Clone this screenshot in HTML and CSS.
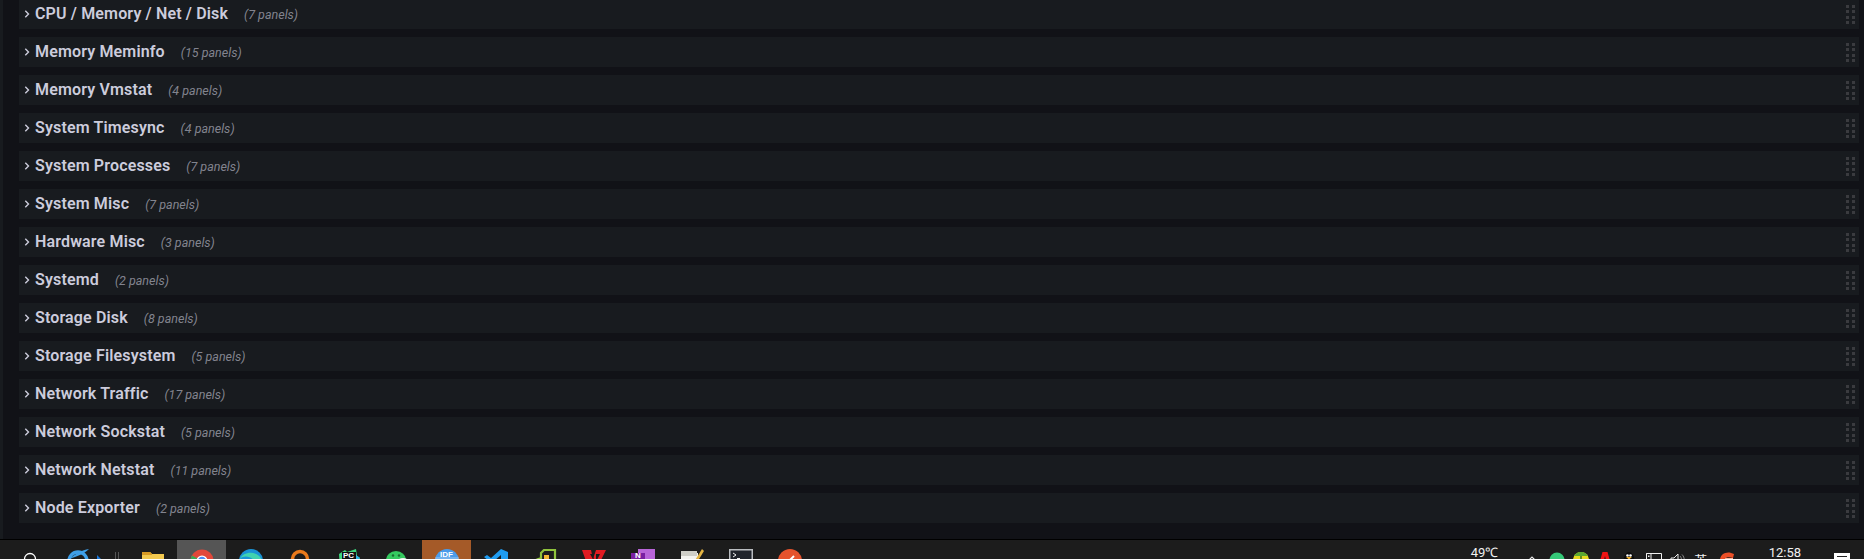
FILE: index.html
```html
<!DOCTYPE html>
<html lang="en">
<head>
    <meta charset="UTF-8">
    <meta name="viewport" content="width=device-width, initial-scale=1.0">
    <title>Node Exporter</title>
    <link rel="stylesheet" href="styles.css">
</head>
<body>

    <svg class="defs" width="0" height="0">
        <symbol id="chevron" viewBox="0 0 16 16">
            <path d="M6.300 4.800 9.500 8l-3.200 3.200" fill="none" stroke="currentColor" stroke-width="1.400"/>
        </symbol>
        <symbol id="grip" viewBox="0 0 10 19">
            <path d="M0 0h3v3H0zM6 0h3v3H6zM0 5h3v3H0zM6 5h3v3H6zM0 11h3v3H0zM6 11h3v3H6zM0 16h3v3H0zM6 16h3v3H6z" fill="currentColor"/>
        </symbol>
    </svg>

    <main class="dashboard">
        <div class="rows">
            <div class="row"><svg class="chevron"><use href="#chevron"/></svg><span class="row-title">CPU / Memory / Net / Disk</span><span class="row-count">(7 panels)</span><svg class="grip"><use href="#grip"/></svg></div>
            <div class="row"><svg class="chevron"><use href="#chevron"/></svg><span class="row-title">Memory Meminfo</span><span class="row-count">(15 panels)</span><svg class="grip"><use href="#grip"/></svg></div>
            <div class="row"><svg class="chevron"><use href="#chevron"/></svg><span class="row-title">Memory Vmstat</span><span class="row-count">(4 panels)</span><svg class="grip"><use href="#grip"/></svg></div>
            <div class="row"><svg class="chevron"><use href="#chevron"/></svg><span class="row-title">System Timesync</span><span class="row-count">(4 panels)</span><svg class="grip"><use href="#grip"/></svg></div>
            <div class="row"><svg class="chevron"><use href="#chevron"/></svg><span class="row-title">System Processes</span><span class="row-count">(7 panels)</span><svg class="grip"><use href="#grip"/></svg></div>
            <div class="row"><svg class="chevron"><use href="#chevron"/></svg><span class="row-title">System Misc</span><span class="row-count">(7 panels)</span><svg class="grip"><use href="#grip"/></svg></div>
            <div class="row"><svg class="chevron"><use href="#chevron"/></svg><span class="row-title">Hardware Misc</span><span class="row-count">(3 panels)</span><svg class="grip"><use href="#grip"/></svg></div>
            <div class="row"><svg class="chevron"><use href="#chevron"/></svg><span class="row-title">Systemd</span><span class="row-count">(2 panels)</span><svg class="grip"><use href="#grip"/></svg></div>
            <div class="row"><svg class="chevron"><use href="#chevron"/></svg><span class="row-title">Storage Disk</span><span class="row-count">(8 panels)</span><svg class="grip"><use href="#grip"/></svg></div>
            <div class="row"><svg class="chevron"><use href="#chevron"/></svg><span class="row-title">Storage Filesystem</span><span class="row-count">(5 panels)</span><svg class="grip"><use href="#grip"/></svg></div>
            <div class="row"><svg class="chevron"><use href="#chevron"/></svg><span class="row-title">Network Traffic</span><span class="row-count">(17 panels)</span><svg class="grip"><use href="#grip"/></svg></div>
            <div class="row"><svg class="chevron"><use href="#chevron"/></svg><span class="row-title">Network Sockstat</span><span class="row-count">(5 panels)</span><svg class="grip"><use href="#grip"/></svg></div>
            <div class="row"><svg class="chevron"><use href="#chevron"/></svg><span class="row-title">Network Netstat</span><span class="row-count">(11 panels)</span><svg class="grip"><use href="#grip"/></svg></div>
            <div class="row"><svg class="chevron"><use href="#chevron"/></svg><span class="row-title">Node Exporter</span><span class="row-count">(2 panels)</span><svg class="grip"><use href="#grip"/></svg></div>
        </div>
    </main>

    <footer class="taskbar">
        <div class="task-start">
            <div class="task search">
                <svg width="24" height="24" viewBox="0 0 24 24"><circle cx="12" cy="11" r="5.500" fill="none" stroke="#fff" stroke-width="1.300"/></svg>
            </div>
            <div class="task ie">
                <svg width="24" height="24" viewBox="0 0 24 24"><circle cx="11" cy="13" r="9" fill="none" stroke="#3f9fe8" stroke-width="3.500"/><path d="M2 11C8 6 15 2 22 1c-3 3-8 6-14 8z" fill="#3f9fe8"/></svg>
            </div>
            <svg class="arrow" width="9" height="12" viewBox="0 0 9 12"><path d="M0 0 8 8 0 12z" fill="#1976d8"/></svg>
            <div class="divider"></div>
        </div>
        <div class="task-list">
            <div class="task"><svg width="24" height="24" viewBox="0 0 24 24"><path d="M1 3h8l2 2h12v16H1z" fill="#f3c94f"/><path d="M1 3h8l2 2v1H1z" fill="#d99b25"/></svg></div>
            <div class="task active">
                <svg width="24" height="24" viewBox="0 0 24 24"><circle cx="12" cy="12" r="11.500" fill="#e2473a"/><path d="M12 12 2 6.500a11.500 11.500 0 0 0 6 16.500z" fill="#3ca655"/><path d="M12 12h11.500A11.500 11.500 0 0 1 9 23z" fill="#f9cf3a"/><circle cx="12" cy="12" r="5.500" fill="#fff"/><circle cx="12" cy="12" r="4.200" fill="#4c8bf5"/></svg>
            </div>
            <div class="task"><svg width="24" height="24" viewBox="0 0 24 24"><circle cx="12" cy="12" r="12" fill="#1a93d6"/><path d="M1 10C4 2 20 1 23 12c0 3-5 4-8 3 3-5-9-11-14-5z" fill="#40d3b0"/></svg></div>
            <div class="task"><svg width="24" height="24" viewBox="0 0 24 24"><circle cx="12" cy="10" r="7.500" fill="none" stroke="#ea7a1c" stroke-width="3.500"/></svg></div>
            <div class="task">
                <svg width="24" height="24" viewBox="0 0 24 24"><path d="M2 5 8 1l2 2 9-3 1 7 3 2-3 12H3z" fill="#3fd77c"/><path d="M5 3h14v17H5z" fill="#111"/><text x="6" y="9" class="icon-text">PC</text><path d="M19 6l4 3-4 3z" fill="#2fb4e8"/></svg>
            </div>
            <div class="task">
                <svg width="24" height="24" viewBox="0 0 24 24"><ellipse cx="10" cy="11" rx="10" ry="9" fill="#35c95f"/><circle cx="7" cy="6.500" r="1.200" fill="#1a6b30"/><circle cx="13" cy="6.500" r="1.200" fill="#1a6b30"/><ellipse cx="17" cy="15" rx="7" ry="6" fill="#f2f2f2"/></svg>
            </div>
            <div class="task tile">
                <svg width="24" height="24" viewBox="0 0 24 24"><circle cx="12" cy="12" r="12" fill="#4a9bea"/><path d="M0 8h24v16H0z" fill="#f4f4f4" opacity=".25"/><text x="5" y="8" class="icon-text">IDF</text></svg>
            </div>
            <div class="task"><svg width="24" height="24" viewBox="0 0 24 24"><path d="M17 0 24 3v18l-7 3L7 14l-4 3-3-2 5-3-5-4 3-2 4 3z" fill="#1f9cf0"/><path d="M17 6v12l-7-6z" fill="#1b1b1b"/></svg></div>
            <div class="task"><svg width="24" height="24" viewBox="0 0 24 24"><path d="M8 9V4l3-3h11v18l-6 4H3V11z" fill="none" stroke="#8fc33c" stroke-width="2.200"/><path d="M11 10V6h5v7h-5z" fill="#f2b632"/></svg></div>
            <div class="task"><svg width="24" height="24" viewBox="0 0 24 24"><path d="M0 1h9l2 9 3-9h10l-6 12-6 10h-4L4 12z" fill="#e01b22"/><path d="M8 5h3l1 7zM14 5h4l-4 8z" fill="#1b1b1b"/></svg></div>
            <div class="task"><svg width="24" height="24" viewBox="0 0 24 24"><path d="M7 0h17v24H7z" fill="#b865d8"/><path d="M0 4h14v18H0z" fill="#7a1fa2"/><text x="4" y="9" class="icon-text">N</text></svg></div>
            <div class="task"><svg width="24" height="24" viewBox="0 0 24 24"><path d="M1 2 18 4v20H1z" fill="#f4f4f0"/><path d="M1 2h16v5H1z" fill="#cfcfc8"/><path d="M5 11h3v8H5zM10 13h2v6h-2z" fill="#888"/><path d="M22 0l2 2-8 13-3 2 1-4z" fill="#e3b341"/></svg></div>
            <div class="task"><svg width="24" height="24" viewBox="0 0 24 24"><path d="M0 0h24v24H0z" fill="#b9bcc0"/><path d="M1.500 1.500h21v21h-21z" fill="#20242c"/><path d="M4 4l3 2-3 2" fill="none" stroke="#eee"/><path d="M8 9h3v1H8z" fill="#eee"/><path d="M12 17l5-5 5 4v6H12z" fill="#3c78c8"/></svg></div>
            <div class="task"><svg width="24" height="24" viewBox="0 0 24 24"><circle cx="12" cy="12" r="12" fill="#e5532d"/><path d="M7 16 16 7" stroke="#fff" stroke-width="2"/><circle cx="6.500" cy="16.500" r="2" fill="#fff"/></svg></div>
        </div>

        <div class="tray">
            <span class="tray-text temp">49℃</span>
            <div class="tray-icons">
                <svg width="16" height="16" viewBox="0 0 16 16"><path d="M4 9l4-4 4 4" fill="none" stroke="#e8e8e8" stroke-width="1.200"/></svg>
                <svg width="16" height="16" viewBox="0 0 16 16"><circle cx="8" cy="8" r="7.500" fill="#35c978"/><circle cx="13" cy="11" r="4" fill="#d8d8d8"/></svg>
                <svg width="16" height="16" viewBox="0 0 16 16"><circle cx="8" cy="8" r="8" fill="#e5d81f"/><path d="M1 4a8 8 0 0 1 14 0z" fill="#5aa832"/><path d="M7.300 4h1.400v6H7.300z" fill="#2b6b1a"/></svg>
                <svg width="16" height="16" viewBox="0 0 16 16"><path d="M5.500 0h5L15 16h-4l-1-4H6l-1 4H1z" fill="#f01414"/><path d="M7 8h2L8 4z" fill="#1c1c1c"/></svg>
                <svg width="16" height="16" viewBox="0 0 16 16"><ellipse cx="8" cy="9" rx="5.500" ry="9" fill="#0c0c0c"/><circle cx="6.500" cy="3.500" r="1.300" fill="#fff"/><circle cx="9.500" cy="3.500" r="1.300" fill="#fff"/><path d="M5 5h6L8 7.500z" fill="#f2b12a"/></svg>
                <svg width="16" height="16" viewBox="0 0 16 16"><path d="M.5 1.500h15v10H.5z" fill="none" stroke="#f0f0f0"/><path d="M.5 1.500h4.500v7H.5z" fill="#1c1c1c" stroke="#f0f0f0"/><path d="M2 3.500h1.500V5H2z" fill="#f0f0f0"/></svg>
                <svg width="16" height="16" viewBox="0 0 16 16"><path d="M1 6h3l4-4v12l-4-4H1z" fill="none" stroke="#e8e8e8"/><path d="M10 4c2 2 2 6 0 8M12 2.500c3 3 3 8 0 11" fill="none" stroke="#8a8a8a"/></svg>
                <span class="ime">英</span>
                <svg width="16" height="16" viewBox="0 0 16 16"><path d="M15 2C8-2 1 2 1 8c0 5 6 8 12 6l1-3.500C10 13 5 11 5.500 8 6 5 10 4.500 14 6z" fill="#ec4f26"/><path d="M6 6h8v6H7z" fill="#f7b8a0"/></svg>
            </div>
            <span class="tray-text clock">12:58</span>
            <svg class="notify" width="16" height="16" viewBox="0 0 16 16"><path d="M0 0h16v12H0z" fill="#fff"/><path d="M3 3h10v1H3zM3 6h10v1H3z" fill="#222"/></svg>
        </div>
    </footer>

</body>
</html>
```
FILE: styles.css
```css
* {
    box-sizing: border-box;
}

body {
    margin: 0;
    height: 559px;
    display: flex;
    flex-direction: column;
    overflow: hidden;
    background: #111217;
    font-family: Roboto, sans-serif;
}

.defs {
    position: absolute;
}

.dashboard {
    height: 539px;
    padding-left: 3px;
    border-left: 3px solid #181b1f;
    overflow: hidden;
}

.rows {
    margin: -1px 5px 0 13px;
    display: flex;
    flex-direction: column;
    gap: 8px;
}

.row {
    height: 30px;
    display: flex;
    align-items: center;
    background: #181b1f;
    color: #ccccdc;
}

.chevron {
    width: 16px;
    height: 16px;
    flex-shrink: 0;
}

.row-title {
    font-size: 16px;
    font-weight: 600;
    letter-spacing: 0.15px;
    padding-bottom: 2px;
}

.row-count {
    font-size: 12.500px;
    font-style: italic;
    color: rgba(204, 204, 220, 0.6);
    margin-left: 16px;
}

.grip {
    width: 10px;
    height: 19px;
    margin-left: auto;
    margin-right: 3px;
    color: #3a3b3f;
}

/* taskbar, only its top part is on screen */
.taskbar {
    height: 20px;
    flex-shrink: 0;
    display: flex;
    overflow: hidden;
    border-top: 1px solid #000;
    background: #1c1c1c;
}

.task-start {
    width: 128px;
    padding-left: 5px;
    display: flex;
}

.task-list {
    display: flex;
}

.task {
    width: 49px;
    height: 40px;
    padding-top: 9px;
    display: flex;
    justify-content: center;
}

.search {
    padding-top: 8px;
}

.ie {
    padding-top: 8px;
}

.arrow {
    margin: 15px 0 0 -6px;
}

.divider {
    width: 4px;
    height: 12px;
    margin: 12px 0 0 9px;
    border-left: 1px solid #555;
    border-right: 1px solid #555;
}

.active {
    background: #555;
}

.tile {
    background: #a55a28;
}

.icon-text {
    font-family: "Liberation Sans", sans-serif;
    font-size: 8px;
    font-weight: 700;
    fill: #fff;
}

.tray {
    margin-left: auto;
    display: flex;
    color: #f0f0f0;
}

.tray-text {
    font-size: 13px;
    line-height: 15px;
    padding-top: 5px;
}

.temp {
    margin-right: 26px;
}

.tray-icons {
    display: flex;
    gap: 8.300px;
    padding-top: 12px;
}

.ime {
    width: 16px;
    font-family: "Noto Sans CJK SC", sans-serif;
    font-size: 13px;
    line-height: 16px;
    color: #f0f0f0;
}

.clock {
    margin-left: 34px;
}

.notify {
    margin: 13px 14px 0 33px;
}
```
